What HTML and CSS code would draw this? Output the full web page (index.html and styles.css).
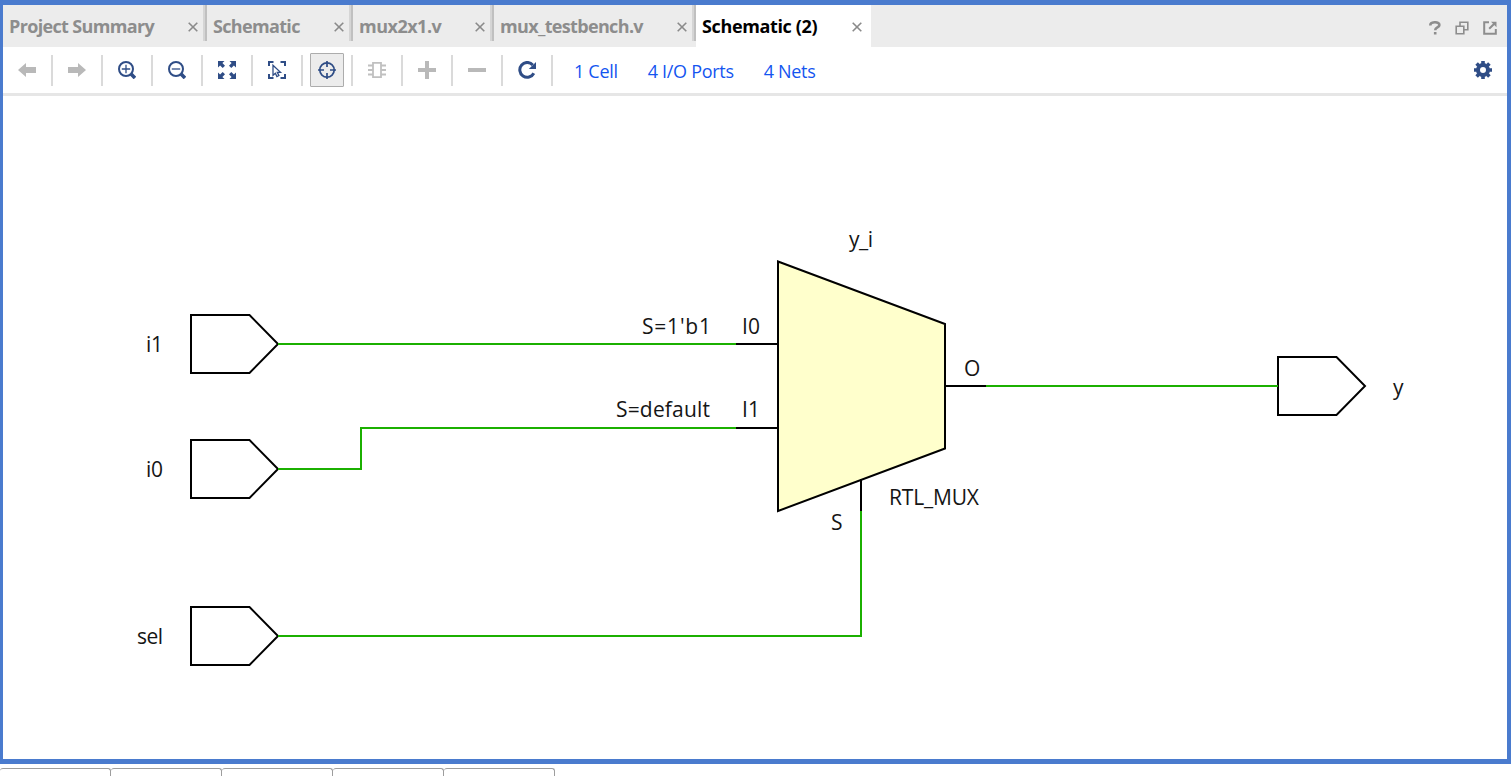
FILE: index.html
```html
<!DOCTYPE html>
<html lang="en">
<head>
<meta charset="utf-8">
<title>Schematic (2)</title>
<link rel="stylesheet" href="styles.css">
</head>
<body>
<main class="frame">
  <header class="tabs">
    <div class="tab tab-summary"><span class="label">Project Summary</span><svg class="close" viewBox="0 0 10 10"><path d="M.7.7l8.6 8.6M9.3.7L.7 9.3"/></svg></div>
    <div class="tab tab-schematic"><span class="label">Schematic</span><svg class="close" viewBox="0 0 10 10"><path d="M.7.7l8.6 8.6M9.3.7L.7 9.3"/></svg></div>
    <div class="tab tab-mux"><span class="label">mux2x1.v</span><svg class="close" viewBox="0 0 10 10"><path d="M.7.7l8.6 8.6M9.3.7L.7 9.3"/></svg></div>
    <div class="tab tab-bench"><span class="label">mux_testbench.v</span><svg class="close" viewBox="0 0 10 10"><path d="M.7.7l8.6 8.6M9.3.7L.7 9.3"/></svg></div>
    <div class="tab tab-active"><span class="label">Schematic (2)</span><svg class="close" viewBox="0 0 10 10"><path d="M.7.7l8.6 8.6M9.3.7L.7 9.3"/></svg></div>
    <div class="window-tools">
      <svg width="12" height="14" viewBox="0 0 12 14"><path d="M1.300 4.400C1.300 .3 10.400 .3 10.400 4c0 2.600-4.200 2.300-4.200 5.200M6.200 11v2.600" fill="none" stroke="#8d8d8d" stroke-width="2.600"/></svg>
      <svg width="14" height="14" viewBox="0 0 14 14"><path d="M5 4.500V1.200h7.800v7.600H9.500M1.200 5.200h7.600v7.600H1.200z" fill="none" stroke="#8d8d8d" stroke-width="1.600"/></svg>
      <svg width="14" height="14" viewBox="0 0 14 14"><path d="M6 1.200H1.200v11.600h11.600V8" fill="none" stroke="#8d8d8d" stroke-width="2"/><path d="M6.200 7.800L11 3" fill="none" stroke="#8d8d8d" stroke-width="2"/><path d="M8 .8h5.500v5.500z" fill="#8d8d8d"/></svg>
    </div>
  </header>
  <nav class="toolbar">
    <div class="cell"><svg class="icon gray" viewBox="0 0 18 18"><path d="M0 9l8-7v4h10v6H8v4z"/></svg></div>
    <div class="cell"><svg class="icon gray" viewBox="0 0 18 18"><path d="M18 9l-8-7v4H0v6h10v4z"/></svg></div>
    <div class="cell"><svg class="icon line" viewBox="0 0 18 18"><circle cx="8" cy="8" r="7"/><path class="thin" d="M8 3.800v8.400M3.800 8h8.400"/><path class="handle" d="M12.800 12.800L17 17"/></svg></div>
    <div class="cell"><svg class="icon line" viewBox="0 0 18 18"><circle cx="8" cy="8" r="7"/><path class="thin" d="M3.800 8h8.400"/><path class="handle" d="M12.800 12.800L17 17"/></svg></div>
    <div class="cell"><svg class="icon blue" viewBox="0 0 18 18"><path d="M0 0h6.500L4.400 2.100 7 4.700 4.700 7 2.100 4.400 0 6.500zM18 0v6.500l-2.100-2.100L13.300 7 11 4.700l2.600-2.600L11.500 0zM0 18v-6.500l2.100 2.100L4.700 11 7 13.300l-2.600 2.600L6.500 18zM18 18h-6.500l2.100-2.100-2.600-2.600 2.300-2.300 2.600 2.600 2.100-2.100z"/></svg></div>
    <div class="cell"><svg class="icon line" viewBox="0 0 18 18"><path d="M1 5V1h4.500M12.500 1H17v4M1 13v4h4.500M12.500 17H17v-4"/><path class="thin" d="M5 4.300v10l2.400-2 1.500 3.200 2-1-1.600-3.100h3.200z"/></svg></div>
    <div class="cell"><span class="pressed"><svg class="icon line cross" viewBox="0 0 18 18"><circle cx="9" cy="9" r="7.200"/><path d="M9 0v6M9 12v6M0 9h6M12 9h6"/></svg></span></div>
    <div class="cell"><svg class="icon chip" viewBox="0 0 18 18"><path d="M5 1.800h8v14.400H5zM0 4.500h5M0 9h5M0 13.500h5M13 4.500h5M13 9h5M13 13.500h5"/></svg></div>
    <div class="cell"><svg class="icon gray" viewBox="0 0 18 18"><path d="M7 0h4v7h7v4h-7v7H7v-7H0V7h7z"/></svg></div>
    <div class="cell"><svg class="icon gray" viewBox="0 0 18 18"><path d="M0 7h18v4H0z"/></svg></div>
    <div class="cell"><svg class="icon refresh" viewBox="0 0 18 18"><path d="M15.800 12.200A7.400 7.400 0 1 1 14.800 4" fill="none" stroke="#2f4d86" stroke-width="3"/><path d="M18 1v7h-7.200z" fill="#2f4d86"/></svg></div>
    <div class="links"><a class="l-cell">1 Cell</a><a class="l-ports">4 I/O Ports</a><a class="l-nets">4 Nets</a></div>
    <svg class="icon gear" viewBox="0 0 18 18"><circle cx="9" cy="9" r="5" fill="none" stroke="#2f4d86" stroke-width="4"/><path d="M9 0v3M9 15v3M0 9h3M15 9h3M2.600 2.600l2 2M13.400 13.400l2 2M2.600 15.400l2-2M13.400 4.600l2-2" fill="none" stroke="#2f4d86" stroke-width="3.600"/></svg>
  </nav>
  <svg class="schematic" width="1504" height="663" viewBox="3 96 1504 663">
    <g class="port">
      <path d="M191 315h58.500L278 344l-28.500 29H191z"/>
      <path d="M191 440h58.500L278 469l-28.500 29H191z"/>
      <path d="M191 607h58.500L278 636l-28.500 29H191z"/>
      <path d="M1278 357h58.500L1365 386l-28.500 29H1278z"/>
    </g>
    <path class="mux" d="M778 261.500L945 324V448.500L778 511z"/>
    <path class="pin" d="M736 344h42M736 428h42M945 386h41M861 479v32"/>
    <path class="net" d="M278 344h458M278 469h83v-41h375M278 636h583V511M986 386h292"/>
    <g class="names">
      <text x="146" y="352" textLength="17">i1</text>
      <text x="146" y="477" textLength="17">i0</text>
      <text x="137" y="644" textLength="26">sel</text>
      <text x="1393" y="395">y</text>
      <text x="849" y="247" textLength="24">y_i</text>
      <text x="642" y="334" textLength="69">S=1'b1</text>
      <text x="742" y="334" textLength="18">I0</text>
      <text x="616" y="417" textLength="94">S=default</text>
      <text x="742" y="417" textLength="18">I1</text>
      <text x="964" y="376">O</text>
      <text x="831" y="530">S</text>
      <text x="889" y="505" textLength="90">RTL_MUX</text>
    </g>
  </svg>
</main>
<footer class="bottom-tabs"><i></i><i></i><i></i><i></i><i></i></footer>
</body>
</html>
```
FILE: styles.css
```css
* { box-sizing: border-box; }
body {
  margin: 0;
  width: 1511px;
  height: 776px;
  overflow: hidden;
  background: #fff;
  font-family: "Open Sans", "Noto Sans", sans-serif;
}
.frame {
  height: 764px;
  border: solid #4a7bce;
  border-width: 5px 4px 5px 3px;
  display: flex;
  flex-direction: column;
}
.tabs { display: flex; height: 42px; background: #ececec; flex: none; }
.tab {
  position: relative;
  display: flex;
  align-items: center;
  justify-content: space-between;
  padding: 0 9px 0 6px;
  height: 42px;
  font-size: 18px;
  font-weight: 700;
  line-height: 42px;
  letter-spacing: -0.66px;
  color: #8d8d8d;
  white-space: nowrap;
}
.tab:not(.tab-active)::after {
  content: "";
  position: absolute;
  right: 0;
  top: 0;
  width: 4px;
  height: 36px;
  background: linear-gradient(90deg, #d5d5d5 50%, #c0c0c0 50%);
}
.tab-summary { width: 204px; }
.tab-schematic { width: 146px; }
.tab-mux { width: 141px; letter-spacing: -0.5px; }
.tab-bench { width: 202px; }
.tab-active { width: 175px; letter-spacing: -0.36px; background: #fff; color: #000; }
.close { width: 10px; height: 10px; margin-top: 1px; fill: none; stroke: #8a8a8a; stroke-width: 1.6; }
.window-tools { display: flex; align-items: center; gap: 14px; margin-left: auto; padding: 3px 10px 0 0; }
.toolbar {
  display: flex;
  align-items: center;
  flex: none;
  height: 49px;
  border-bottom: 3px solid #e6e6e6;
}
.cell {
  width: 50px;
  height: 31px;
  border-right: 2px solid #dadada;
  display: flex;
  align-items: center;
  justify-content: center;
}
.icon { width: 18px; height: 18px; flex: none; }
.gray { fill: #b9b9b9; }
.blue { fill: #2f4d86; }
.line { fill: none; stroke: #2f4d86; stroke-width: 2; }
.thin { stroke-width: 1.3; }
.handle { stroke-width: 3.6; }
.cross { stroke-width: 1.7; }
.chip { fill: none; stroke: #c0c0c0; stroke-width: 1.8; }
.pressed {
  display: flex;
  align-items: center;
  justify-content: center;
  flex: none;
  width: 34px;
  height: 34px;
  background: #ececec;
  border: 1px solid #acacac;
  border-radius: 1px;
}
.links {
  display: flex;
  gap: 30px;
  padding: 1px 0 0 21px;
  font-size: 18px;
  line-height: 24px;
  letter-spacing: -0.3px;
  color: #1455f0;
  white-space: nowrap;
}
.gear { margin: 0 15px 0 auto; }
.schematic { display: block; flex: none; }
.port path, .mux, .pin { fill: none; stroke: #000; stroke-width: 2; }
.mux { fill: #ffffcc; }
.net { fill: none; stroke: #1bb000; stroke-width: 2; }
.names { font-size: 21px; fill: #151515; }
.bottom-tabs { display: flex; padding-top: 4px; }
.bottom-tabs i {
  width: 111px;
  height: 12px;
  border: 1px solid #9d9d9d;
  border-bottom: 0;
  border-left: 0;
  border-radius: 3px 3px 0 0;
}
.label { padding-bottom: 0; }
```
